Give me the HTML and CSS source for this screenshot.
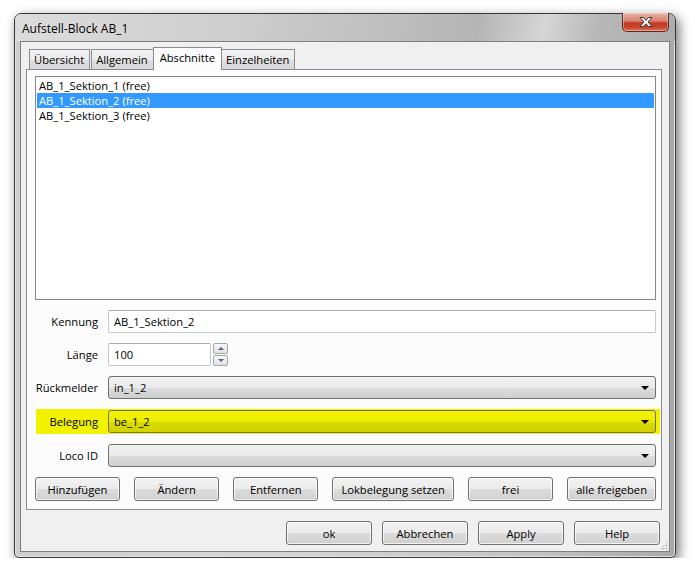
FILE: index.html
```html
<!DOCTYPE html>
<html lang="de">

<head>
    <meta charset="UTF-8">
    <title>Aufstell-Block AB_1</title>
    <link rel="stylesheet" href="styles.css">
</head>

<body>
    <div class="window">
        <div class="titlebar">
            <span class="title">Aufstell-Block AB_1</span>
            <div class="close">
                <svg width="14" height="12" viewBox="0 0 14 12">
                    <path d="M1 1.5 H4.5 L7 4.3 L9.5 1.5 H13 L9 6 L13 10.5 H9.5 L7 7.7 L4.5 10.5 H1 L5 6 Z" fill="#fff" stroke="#3b3b3b" stroke-width="1" stroke-linejoin="round"/>
                </svg>
            </div>
        </div>
        <div class="client">
            <div class="tabs">
                <div class="tab">Übersicht</div>
                <div class="tab">Allgemein</div>
                <div class="tab active">Abschnitte</div>
                <div class="tab">Einzelheiten</div>
            </div>
            <div class="pane">
                <ul class="list">
                    <li>AB_1_Sektion_1 (free)</li>
                    <li class="selected">AB_1_Sektion_2 (free)</li>
                    <li>AB_1_Sektion_3 (free)</li>
                </ul>
                <div class="row">
                    <label>Kennung</label>
                    <div class="edit">AB_1_Sektion_2</div>
                </div>
                <div class="row">
                    <label>Länge</label>
                    <div class="edit short">100</div>
                    <div class="spin">
                        <div class="spin-btn"><span class="up"></span></div>
                        <div class="spin-btn"><span class="down"></span></div>
                    </div>
                </div>
                <div class="row">
                    <label>Rückmelder</label>
                    <div class="combo">in_1_2<span class="arrow"></span></div>
                </div>
                <div class="row marked">
                    <label>Belegung</label>
                    <div class="combo yellow">be_1_2<span class="arrow"></span></div>
                </div>
                <div class="row">
                    <label>Loco ID</label>
                    <div class="combo"><span class="arrow"></span></div>
                </div>
                <div class="actions">
                    <button class="btn">Hinzufügen</button>
                    <button class="btn">Ändern</button>
                    <button class="btn">Entfernen</button>
                    <button class="btn">Lokbelegung setzen</button>
                    <button class="btn">frei</button>
                    <button class="btn">alle freigeben</button>
                </div>
            </div>
            <div class="footer">
                <button class="btn wide">ok</button>
                <button class="btn wide">Abbrechen</button>
                <button class="btn wide">Apply</button>
                <button class="btn wide">Help</button>
            </div>
            <div class="grip"></div>
        </div>
    </div>
</body>

</html>
```

FILE: styles.css
```css
* {
    box-sizing: border-box;
}

body {
    margin: 0;
    padding: 13px 0 0 14px;
    background-color: #fff;
    font-family: 'Open Sans', 'Noto Sans', sans-serif;
    font-size: 11.2px;
    color: #000;
}

.window {
    width: 662px;
    height: 545px;
    border: 1px solid #383838;
    border-radius: 7px 7px 5px 5px;
    padding: 0 5px 5px;
    display: flex;
    flex-direction: column;
    background: linear-gradient(to right, #cfcfcf, #d6d6d6 40%, #c2c2c2 80%, #a8a8a8);
    box-shadow: 3px 4px 12px rgba(0, 0, 0, 0.55), inset 0 0 0 1px #e6e6e6;
}

.titlebar {
    height: 27px;
    display: flex;
    align-items: center;
    margin: 0 -5px;
    padding: 0 6px 0 7px;
    border-radius: 6px 6px 0 0;
    font-size: 12px;
    background: linear-gradient(100deg, #dcdcdc 0%, #cdcdcd 35%, #b5b5b5 70%, #d6d6d6 80%, #b8b8b8 88%, #adadad 100%);
}

.title {
    flex: 1;
    padding-top: 1px;
}

.close {
    align-self: flex-start;
    margin-top: -1px;
    width: 47px;
    height: 19px;
    border: 1px solid #5a2a22;
    border-top: none;
    border-radius: 0 0 5px 5px;
    display: flex;
    align-items: center;
    justify-content: center;
    background: linear-gradient(to bottom, #e9b1a4 0%, #d7826f 45%, #c23a22 55%, #c8462c 80%, #e0785c 100%);
    box-shadow: inset 0 0 0 1px rgba(255, 255, 255, 0.35);
}

.client {
    flex: 1;
    position: relative;
    display: flex;
    flex-direction: column;
    border: 1px solid #7f7f7f;
    background-color: #f0f0f0;
    padding: 5px 7px 6px 5px;
}

.tabs {
    height: 22px;
    display: flex;
    align-items: flex-end;
    padding-left: 3px;
}

.tab {
    height: 20px;
    padding: 0 5px 0 4px;
    border: 1px solid #898c95;
    border-bottom: none;
    margin-right: 1px;
    line-height: 19px;
    background: linear-gradient(to bottom, #f3f3f3, #ebebeb 50%, #dedede 51%, #d8d8d8);
}

.tab.active {
    height: 23px;
    margin: 0 -1px -1px -2px;
    padding: 0 6px;
    position: relative;
    z-index: 1;
    line-height: 19px;
    background-color: #fcfcfc;
    background-image: none;
}

.pane {
    flex: 1;
    display: flex;
    flex-direction: column;
    gap: 10px;
    border: 1px solid #898c95;
    background-color: #fcfcfc;
    padding: 6px 5px 8px 8px;
}

.list {
    flex: 1;
    margin: 0;
    padding: 1px;
    list-style: none;
    border: 1px solid #828790;
    background-color: #fff;
}

.list li {
    height: 15px;
    line-height: 15px;
    padding-left: 2px;
}

.list li.selected {
    background-color: #3399ff;
    color: #fff;
}

.row {
    height: 23px;
    display: flex;
    align-items: center;
}

.row label {
    width: 63px;
    margin-right: 10px;
    text-align: right;
}

.row.marked {
    height: 25px;
    margin: 0 -4px 0 1px;
    padding-right: 4px;
    background-color: #f2f200;
}

.row.marked label {
    width: 62px;
}

.edit {
    flex: 1;
    height: 23px;
    padding: 0 5px;
    line-height: 21px;
    border: 1px solid #c4c8cf;
    border-top-color: #abadb3;
    border-radius: 2px;
    background-color: #fff;
}

.edit.short {
    flex: none;
    width: 103px;
}

.spin {
    margin-left: 2px;
    display: flex;
    flex-direction: column;
    gap: 1px;
}

.spin-btn {
    width: 15px;
    height: 11px;
    border: 1px solid #a7a7a7;
    border-radius: 2px;
    display: flex;
    align-items: center;
    justify-content: center;
    background: linear-gradient(to bottom, #f6f6f6, #e2e2e2);
}

.spin-btn span {
    width: 0;
    height: 0;
    border-left: 3px solid transparent;
    border-right: 3px solid transparent;
}

.spin-btn .up {
    border-bottom: 3px solid #4f6284;
}

.spin-btn .down {
    border-top: 3px solid #4f6284;
}

.combo {
    flex: 1;
    height: 23px;
    position: relative;
    padding: 0 5px;
    line-height: 21px;
    border: 1px solid #707070;
    border-radius: 3px;
    background: linear-gradient(to bottom, #f2f2f2, #ebebeb 50%, #dddddd 51%, #cfcfcf);
}

.combo.yellow {
    background: linear-gradient(to bottom, #f4f400, #ecec00 50%, #dada00 51%, #d2d200);
}

.combo .arrow {
    position: absolute;
    right: 6px;
    top: 9px;
    width: 0;
    height: 0;
    border-left: 4px solid transparent;
    border-right: 4px solid transparent;
    border-top: 4px solid #000;
}

.actions {
    display: flex;
    justify-content: space-between;
}

.btn {
    height: 24px;
    min-width: 85px;
    padding: 0 8px;
    font-family: inherit;
    font-size: 11.2px;
    color: #000;
    border: 1px solid #707070;
    border-radius: 3px;
    background: linear-gradient(to bottom, #f2f2f2, #ebebeb 50%, #dddddd 51%, #cfcfcf);
    box-shadow: inset 0 0 0 1px rgba(255, 255, 255, 0.7);
}

.footer {
    margin-top: 11px;
    padding-right: 2px;
    display: flex;
    justify-content: flex-end;
    gap: 10px;
}

.btn.wide {
    width: 86px;
}

.grip {
    position: absolute;
    right: 1px;
    bottom: 1px;
    width: 9px;
    height: 9px;
    background-image: radial-gradient(circle, #b5b5b5 0.8px, transparent 1.2px);
    background-size: 3px 3px;
    clip-path: polygon(100% 0, 100% 100%, 0 100%);
}
```
